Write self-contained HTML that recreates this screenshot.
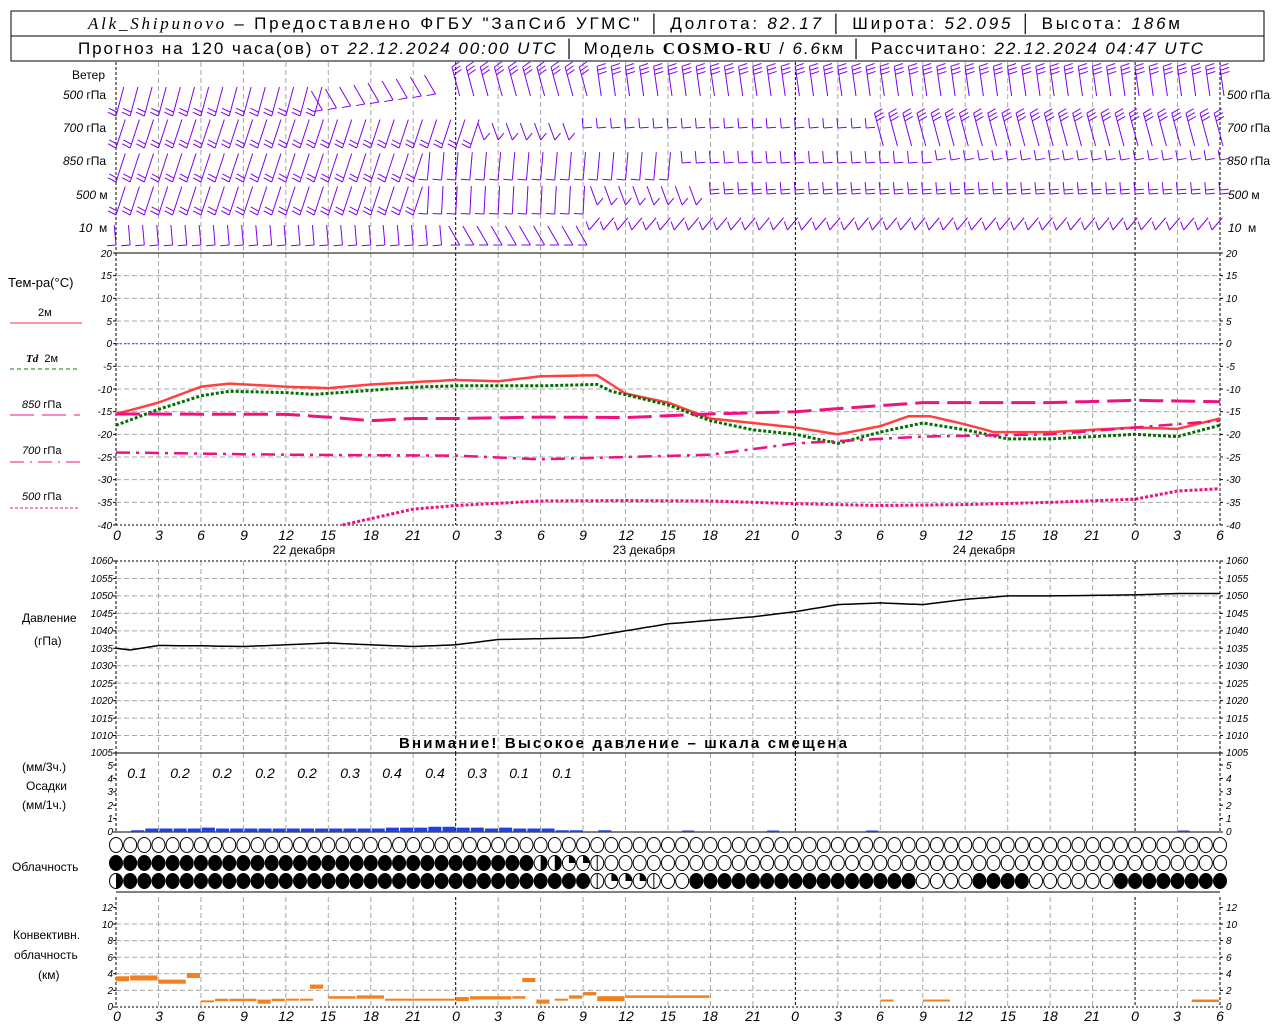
<!DOCTYPE html>
<html><head><meta charset="utf-8"><style>
html,body{margin:0;padding:0;background:#fff;width:1280px;height:1024px;overflow:hidden}
svg{display:block}
text{font-family:"Liberation Sans","DejaVu Sans",sans-serif;fill:#000}
.hd{font-size:17px}
.it{font-style:italic}
.tk{font-size:10px;font-style:italic}
.tl{font-size:14px;font-style:italic}
.lb{font-size:12px}
</style></head><body>
<svg id="s" width="1280" height="1024" viewBox="0 0 1280 1024" xmlns="http://www.w3.org/2000/svg">
<rect x="11" y="11" width="1253" height="50" fill="none" stroke="#000" stroke-width="1"/>
<line x1="11" y1="36" x2="1264" y2="36" stroke="#000"/>
<text class="hd" x="88" y="29" textLength="1092" lengthAdjust="spacing"><tspan font-family="Liberation Serif" font-style="italic">Alk_Shipunovo</tspan> – Предоставлено ФГБУ "ЗапСиб УГМС" │ Долгота: <tspan class="it">82.17</tspan> │ Широта: <tspan class="it">52.095</tspan> │ Высота: <tspan class="it">186</tspan>м</text>
<text class="hd" x="78" y="54" font-size="16" textLength="1125" lengthAdjust="spacing">Прогноз на 120 часа(ов) от <tspan class="it">22.12.2024 00:00 UTC</tspan> │ Модель <tspan font-family="Liberation Serif" font-weight="bold">COSMO-RU</tspan> / <tspan class="it">6.6</tspan>км │ Рассчитано: <tspan class="it">22.12.2024 04:47 UTC</tspan></text>

<g id="grid"></g>
<g id="plot"></g>

<g class="lb" font-size="11">
<text x="72" y="79">Ветер</text>
<text x="63" y="99" class="it">500 <tspan font-style="normal">гПа</tspan></text>
<text x="63" y="132" class="it">700 <tspan font-style="normal">гПа</tspan></text>
<text x="63" y="165" class="it">850 <tspan font-style="normal">гПа</tspan></text>
<text x="76" y="199" class="it">500 <tspan font-style="normal">м</tspan></text>
<text x="79" y="232" class="it">10 <tspan font-style="normal">&#160;м</tspan></text>
<text x="1227" y="99" class="it">500 <tspan font-style="normal">гПа</tspan></text>
<text x="1227" y="132" class="it">700 <tspan font-style="normal">гПа</tspan></text>
<text x="1227" y="165" class="it">850 <tspan font-style="normal">гПа</tspan></text>
<text x="1228" y="199" class="it">500 <tspan font-style="normal">м</tspan></text>
<text x="1228" y="232" class="it">10 <tspan font-style="normal">&#160;м</tspan></text>
</g>
<g class="lb">
<text x="8" y="287" font-size="13">Тем-ра(°C)</text>
<text x="38" y="316" font-size="11">2м</text>
<line x1="10" y1="323" x2="82" y2="323" stroke="#ff3030"/>
<text x="26" y="362" font-size="11"><tspan font-family="Liberation Serif" font-style="italic" font-weight="bold">Td</tspan>&#160; 2м</text>
<line x1="10" y1="369" x2="80" y2="369" stroke="#008000" stroke-dasharray="4,3"/>
<text x="22" y="408" font-size="11"><tspan class="it">850</tspan> гПа</text>
<line x1="10" y1="415" x2="80" y2="415" stroke="#f01080" stroke-dasharray="24,8"/>
<text x="22" y="454" font-size="11"><tspan class="it">700</tspan> гПа</text>
<line x1="10" y1="462" x2="80" y2="462" stroke="#f01080" stroke-dasharray="14,6,2,6"/>
<text x="22" y="500" font-size="11"><tspan class="it">500</tspan> гПа</text>
<line x1="10" y1="508" x2="80" y2="508" stroke="#f01080" stroke-dasharray="3,2"/>
</g>
<g class="tk" text-anchor="end">
<text x="112" y="257">20</text><text x="112" y="279">15</text><text x="112" y="302">10</text><text x="112" y="325">5</text><text x="112" y="347">0</text><text x="112" y="370">-5</text><text x="112" y="393">-10</text><text x="112" y="415">-15</text><text x="112" y="438">-20</text><text x="112" y="461">-25</text><text x="112" y="483">-30</text><text x="112" y="506">-35</text><text x="112" y="529">-40</text>
</g>
<g class="tk">
<text x="1226" y="257">20</text><text x="1226" y="279">15</text><text x="1226" y="302">10</text><text x="1226" y="325">5</text><text x="1226" y="347">0</text><text x="1226" y="370">-5</text><text x="1226" y="393">-10</text><text x="1226" y="415">-15</text><text x="1226" y="438">-20</text><text x="1226" y="461">-25</text><text x="1226" y="483">-30</text><text x="1226" y="506">-35</text><text x="1226" y="529">-40</text>
</g>
<g class="tl" text-anchor="middle" id="t1">
<text x="117" y="540">0</text><text x="159" y="540">3</text><text x="201" y="540">6</text><text x="244" y="540">9</text><text x="286" y="540">12</text><text x="328" y="540">15</text><text x="371" y="540">18</text><text x="413" y="540">21</text><text x="456" y="540">0</text><text x="498" y="540">3</text><text x="541" y="540">6</text><text x="583" y="540">9</text><text x="626" y="540">12</text><text x="668" y="540">15</text><text x="710" y="540">18</text><text x="753" y="540">21</text><text x="795" y="540">0</text><text x="838" y="540">3</text><text x="880" y="540">6</text><text x="923" y="540">9</text><text x="965" y="540">12</text><text x="1008" y="540">15</text><text x="1050" y="540">18</text><text x="1092" y="540">21</text><text x="1135" y="540">0</text><text x="1177" y="540">3</text><text x="1220" y="540">6</text>
</g>
<g class="lb" font-size="13" text-anchor="middle">
<text x="304" y="554">22 декабря</text><text x="644" y="554">23 декабря</text><text x="984" y="554">24 декабря</text>
</g>
<g class="lb" font-size="13"><text x="22" y="622">Давление</text><text x="34" y="645">(гПа)</text></g>
<g class="tk" text-anchor="end" font-size="9">
<text x="113" y="564">1060</text><text x="113" y="582">1055</text><text x="113" y="599">1050</text><text x="113" y="617">1045</text><text x="113" y="634">1040</text><text x="113" y="652">1035</text><text x="113" y="669">1030</text><text x="113" y="687">1025</text><text x="113" y="704">1020</text><text x="113" y="722">1015</text><text x="113" y="739">1010</text><text x="113" y="756">1005</text>
</g>
<g class="tk" font-size="9">
<text x="1226" y="564">1060</text><text x="1226" y="582">1055</text><text x="1226" y="599">1050</text><text x="1226" y="617">1045</text><text x="1226" y="634">1040</text><text x="1226" y="652">1035</text><text x="1226" y="669">1030</text><text x="1226" y="687">1025</text><text x="1226" y="704">1020</text><text x="1226" y="722">1015</text><text x="1226" y="739">1010</text><text x="1226" y="756">1005</text>
</g>
<text x="623" y="748" text-anchor="middle" font-size="15" font-weight="bold" textLength="448" lengthAdjust="spacing">Внимание! Высокое давление – шкала смещена</text>
<g class="lb" font-size="13"><text x="22" y="771">(мм/3ч.)</text><text x="26" y="790">Осадки</text><text x="22" y="809">(мм/1ч.)</text></g>
<g class="tk" text-anchor="end" font-size="9">
<text x="113" y="769">5</text><text x="113" y="782">4</text><text x="113" y="795">3</text><text x="113" y="809">2</text><text x="113" y="822">1</text><text x="113" y="835">0</text>
</g>
<g class="tk" font-size="9">
<text x="1226" y="769">5</text><text x="1226" y="782">4</text><text x="1226" y="795">3</text><text x="1226" y="809">2</text><text x="1226" y="822">1</text><text x="1226" y="835">0</text>
</g>
<g class="tl" font-size="13" text-anchor="middle">
<text x="137" y="778">0.1</text><text x="180" y="778">0.2</text><text x="222" y="778">0.2</text><text x="265" y="778">0.2</text><text x="307" y="778">0.2</text><text x="350" y="778">0.3</text><text x="392" y="778">0.4</text><text x="435" y="778">0.4</text><text x="477" y="778">0.3</text><text x="519" y="778">0.1</text><text x="562" y="778">0.1</text>
</g>
<text x="12" y="871" class="lb" font-size="13">Облачность</text>
<g class="lb" font-size="13"><text x="13" y="939">Конвективн.</text><text x="14" y="959">облачность</text><text x="38" y="979">(км)</text></g>
<g class="tk" text-anchor="end" font-size="9">
<text x="113" y="911">12</text><text x="113" y="928">10</text><text x="113" y="944">8</text><text x="113" y="961">6</text><text x="113" y="977">4</text><text x="113" y="994">2</text><text x="113" y="1010">0</text>
</g>
<g class="tk" font-size="9">
<text x="1226" y="911">12</text><text x="1226" y="928">10</text><text x="1226" y="944">8</text><text x="1226" y="961">6</text><text x="1226" y="977">4</text><text x="1226" y="994">2</text><text x="1226" y="1010">0</text>
</g>
<g class="tl" text-anchor="middle">
<text x="117" y="1021">0</text><text x="159" y="1021">3</text><text x="201" y="1021">6</text><text x="244" y="1021">9</text><text x="286" y="1021">12</text><text x="328" y="1021">15</text><text x="371" y="1021">18</text><text x="413" y="1021">21</text><text x="456" y="1021">0</text><text x="498" y="1021">3</text><text x="541" y="1021">6</text><text x="583" y="1021">9</text><text x="626" y="1021">12</text><text x="668" y="1021">15</text><text x="710" y="1021">18</text><text x="753" y="1021">21</text><text x="795" y="1021">0</text><text x="838" y="1021">3</text><text x="880" y="1021">6</text><text x="923" y="1021">9</text><text x="965" y="1021">12</text><text x="1008" y="1021">15</text><text x="1050" y="1021">18</text><text x="1092" y="1021">21</text><text x="1135" y="1021">0</text><text x="1177" y="1021">3</text><text x="1220" y="1021">6</text>
</g>
</svg>
<script>
(function(){
var NS="http://www.w3.org/2000/svg";
var G=document.getElementById("grid"),P=document.getElementById("plot");
function el(p,n,a){var e=document.createElementNS(NS,n);for(var k in a)e.setAttribute(k,a[k]);p.appendChild(e);return e;}
function X(h){return 116+h*1104/78;}
function ln(p,x1,y1,x2,y2,c,w,d){var a={x1:x1,y1:y1,x2:x2,y2:y2,stroke:c,"stroke-width":w||1};if(d)a["stroke-dasharray"]=d;return el(p,"line",a);}
var panels=[[62,252],[253,525],[561,753],[753,832],[897,1007]];
panels.forEach(function(pn){
 for(var h=0;h<=78;h+=3){var x=X(h);var day=(h%24==0);
  if(h==0||h==78||day) ln(G,x,pn[0],x,pn[1],"#000",1,"3,2");
  else ln(G,x,pn[0],x,pn[1],"#a8a8a8",1,"5,3");}
});
function hg(y0,y1,n){for(var i=1;i<n;i++){var y=y0+(y1-y0)*i/n;ln(G,116,y,1220,y,"#a8a8a8",1,"5,3");}}
hg(253,525,12);hg(561,753,11);hg(907.4,1007,6);
ln(G,116,253,1220,253,"#000",1);ln(G,116,525,1220,525,"#000",1,"2,2");
ln(G,116,561,1220,561,"#000",1,"2,2");ln(G,116,753,1220,753,"#000",1);
ln(G,116,832,1220,832,"#000",1);ln(G,116,892,1220,892,"#000",1);ln(G,116,1007,1220,1007,"#000",1,"2,2");
ln(G,116,343.7,1220,343.7,"#2040ff",1,"2,2");
function ticks(y0,y1,n){for(var i=0;i<=n;i++){var y=y0+(y1-y0)*i/n;ln(G,113,y,116,y,"#000");ln(G,1220,y,1223,y,"#000");}}
ticks(253,525,12);ticks(561,753,11);ticks(765,832,5);ticks(907.4,1007,6);
function interp(k,h){for(var i=0;i<k.length-1;i++){if(h>=k[i][0]&&h<=k[i+1][0]){var t=(h-k[i][0])/(k[i+1][0]-k[i][0]);return k[i][1]+t*(k[i+1][1]-k[i][1]);}}return null;}
function curve(k,yf,c,w,d){var pts=[];for(var h=k[0][0];h<=k[k.length-1][0];h+=0.5){var v=interp(k,h);pts.push(X(h).toFixed(1)+","+yf(v).toFixed(1));}
 var a={points:pts.join(" "),fill:"none",stroke:c,"stroke-width":w};if(d)a["stroke-dasharray"]=d;el(P,"polyline",a);}
function TY(v){return 253+(20-v)*272/60;}
function PY(v){return 561+(1060-v)*192/55;}
curve([[0,-15.5],[3,-13],[6,-9.5],[8,-8.8],[12,-9.5],[15,-9.8],[18,-9],[21,-8.5],[24,-8],[27,-8.3],[30,-7.2],[33,-7],[34,-7],[36,-11],[39,-13],[42,-16.5],[45,-17.5],[48,-18.5],[51,-20],[54,-18.2],[56,-16],[57.5,-16],[60,-17.8],[62,-19.5],[66,-19.5],[69,-19],[72,-18.5],[75,-18.8],[78,-16.5]],TY,"#ff4040",2.5);
curve([[0,-18],[3,-14.5],[6,-11.5],[8,-10.5],[12,-10.8],[14,-11.2],[18,-10.3],[21,-9.6],[24,-9.3],[30,-9.3],[34,-9],[35,-10.5],[39,-13.5],[42,-17],[45,-19],[48,-20],[51,-22],[54,-19.5],[57,-17.5],[60,-19],[63,-21],[66,-21],[72,-20],[75,-20.5],[78,-18]],TY,"#007000",3,"3,2");
curve([[0,-15.5],[12,-15.6],[15,-16.2],[18,-17],[21,-16.5],[24,-16.5],[30,-16.2],[36,-16.3],[42,-15.5],[48,-15],[57,-13],[66,-13],[72,-12.5],[78,-12.8]],TY,"#f01080",3,"24,8");
curve([[0,-24],[12,-24.5],[24,-24.7],[30,-25.5],[36,-25],[42,-24.5],[48,-22],[57,-20.5],[66,-20],[72,-18.5],[78,-17]],TY,"#f01080",2.5,"14,6,3,6");
curve([[16,-40],[21,-36.5],[24,-35.7],[30,-34.7],[36,-34.6],[42,-34.7],[48,-35.3],[54,-35.7],[60,-35.5],[66,-35],[72,-34.3],[75,-32.5],[78,-32]],TY,"#f01080",3,"3,2");
curve([[0,1035],[1,1034.5],[3,1035.8],[6,1035.7],[9,1035.5],[15,1036.5],[18,1036],[21,1035.5],[24,1036],[27,1037.5],[33,1038],[39,1042],[45,1044],[48,1045.5],[51,1047.5],[54,1048],[57,1047.5],[60,1049],[63,1050],[66,1050],[72,1050.3],[75,1050.7],[78,1050.7]],PY,"#000",1.5);
var pr=[0,.1,.2,.2,.2,.2,.25,.2,.2,.2,.2,.2,.2,.2,.2,.2,.2,.2,.2,.25,.25,.25,.3,.3,.25,.25,.2,.25,.2,.2,.2,.1,.1,0,.1];
pr.forEach(function(v,i){if(v>0){var h=13.4*v*1.3;el(P,"rect",{x:X(i)+1,y:832-h,width:13,height:h,fill:"#2040e0"});}});
[[40,.05],[46,.05],[53,.05],[75,.05]].forEach(function(a){el(P,"rect",{x:X(a[0]),y:830.5,width:12,height:1.5,fill:"#2040e0"});});
function circ(x,y,t){
 if(t==1){el(P,"ellipse",{cx:x,cy:y,rx:7,ry:8,fill:"#000"});return;}
 el(P,"ellipse",{cx:x,cy:y,rx:6.5,ry:7.5,fill:"#fff",stroke:"#000","stroke-width":1});
 if(t=="h")el(P,"path",{d:"M"+x+","+(y-7.5)+" A6.5,7.5 0 0,1 "+x+","+(y+7.5)+"Z",fill:"#000"});
 if(t=="q")el(P,"path",{d:"M"+x+","+y+" L"+x+","+(y-7.5)+" A6.5,7.5 0 0,1 "+(x+6.5)+","+y+"Z",fill:"#000"});
 if(t=="v")ln(P,x,y-7.5,x,y+7.5,"#000",1);
}
for(var i=0;i<=78;i++){var x=X(i);
 circ(x,845,0);
 var r2=i<30?1:(i==30?"h":(i==31?"h":(i==32||i==33?"q":(i==34?"v":0))));circ(x,863,r2);
 var r3;if(i==0)r3="h";else if(i<=33)r3=1;else if(i==34||i==38)r3="v";else if(i==35||i==36||i==37)r3="q";else if(i>=41&&i<=56)r3=1;else if(i>=61&&i<=64)r3=1;else if(i>=71)r3=1;else r3=0;
 circ(x,881,r3);}
function CY(v){return 1007-v*99.6/12;}
var cv=[[0,1,3.1,3.7],[1,3,3.2,3.8],[3,5,2.8,3.3],[5,6,3.5,4.1],[6,7,0.6,0.8],[7,8,0.7,1],[8,10,0.7,1],[10,11,0.4,0.9],[11,12,0.7,1],[12,13,0.8,1],[13,14,0.9,1],[13.7,14.7,2.2,2.7],[15,17,1,1.3],[17,19,1,1.4],[19,24,0.8,1],[24,25,0.7,1.2],[25,28,0.9,1.3],[28,29,1,1.3],[28.7,29.7,3,3.5],[29.7,30.7,0.4,0.9],[31,32,0.8,1],[32,33,1,1.4],[33,34,1.4,1.8],[34,36,0.7,1.3],[36,42,1.1,1.4],[54,55,0.7,0.9],[57,59,0.7,0.9],[76,78,0.6,0.9]];
cv.forEach(function(c){el(P,"rect",{x:X(c[0]),y:CY(c[3]),width:X(c[1])-X(c[0])-1,height:Math.max(CY(c[2])-CY(c[3]),2),fill:"#f08020"});});
var WC="#8000f0";
function barb(x,y,ang,len,nf,fl,top){
 var r=ang*Math.PI/180,tx=x+Math.sin(r)*len,ty=y-Math.cos(r)*len;
 ln(P,x,y,tx,ty,WC,1);
 for(var k=0;k<nf;k++){var f=k*4/len;var bx,by;
  if(top){bx=tx+(x-tx)*f;by=ty+(y-ty)*f;}else{bx=x+(tx-x)*f;by=y+(ty-y)*f;}
  var fr=(ang+(fl||70))*Math.PI/180;ln(P,bx,by,bx+Math.sin(fr)*9,by-Math.cos(fr)*9,WC,1);}
}
for(var h=0;h<=78;h++){var x=X(h);
 if(h<15) barb(x,116,15,30,2,-80);
 else if(h<24) barb(x-6,110-(h-15)*2,-30,22,1,-70);
 else if(h<34) barb(x+4,96,-15,30,3,70,1);
 else barb(x+4,96,-8,30,3,80,1);
 if(h<26) barb(x,148,18,30,2,-80);
 else if(h<33) barb(x,140,-20,18,1,60);
 else if(h<54) barb(x,128,-5,10,1,90);
 else barb(x+3,146,-15,34,3,75,1);
 if(h<22) barb(x,182,18,30,2,-80);
 else if(h<40) barb(x,180,5,28,1,-90);
 else if(h<58) barb(x,163,-5,12,1,90);
 else barb(x,160,-10,10,1,90);
 if(h<22) barb(x,215,18,30,2,-80);
 else if(h<34) barb(x,214,3,28,1,-90);
 else if(h<42) barb(x,205,-20,20,1,60);
 else barb(x,194,-5,12,2,90);
 if(h<24) barb(x,245,-5,20,1,-90);
 else if(h<34) barb(x+4,245,-30,22,1,-60);
 else barb(x-8,230,40,16,1,-60);
}
})();
</script>
</body></html>
